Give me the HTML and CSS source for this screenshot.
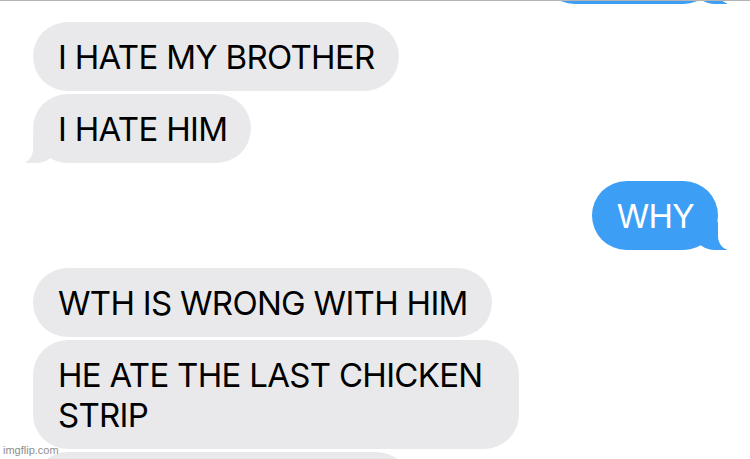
FILE: index.html
```html
<!DOCTYPE html>
<html lang="en">
<head>
    <meta charset="UTF-8">
    <meta name="viewport" content="width=device-width, initial-scale=1.0">
    <title>Messages</title>
    <link rel="stylesheet" href="styles.css">
</head>
<body>

    <div class="thread">
        <div class="bubble sent tail clipped"></div>

        <div class="bubble received first">I HATE MY BROTHER</div>
        <div class="bubble received tail">I HATE HIM</div>

        <div class="bubble sent tail first">WHY</div>

        <div class="bubble received first">WTH IS WRONG WITH HIM</div>
        <div class="bubble received">HE ATE THE LAST CHICKEN STRIP</div>
        <div class="bubble received next"></div>
    </div>

    <div class="watermark">imgflip.com</div>

</body>
</html>
```

FILE: styles.css
```css
/* Global reset */
* {
    margin: 0;
    padding: 0;
    box-sizing: border-box;
}

body {
    font-family: Inter, "Liberation Sans", Arial, sans-serif;
    background-color: #ffffff;
    height: 100vh;
    overflow: hidden;
    border-top: 1px solid #b4b4b4;
}

.thread {
    display: flex;
    flex-direction: column;
    align-items: flex-start;
    gap: 3px;
    padding: 0 32px 0 33px;
}

.bubble {
    position: relative;
    max-width: 486px;
    padding: 15px 24px 14px 25px;
    border-radius: 35px;
    font-size: 33px;
    line-height: 40px;
    letter-spacing: -0.7px;
}

.received {
    background-color: #e9e9eb;
    color: #000;
}

.sent {
    align-self: flex-end;
    background-color: #3d9ef5;
    color: #fff;
}

.first {
    margin-top: 15px;
}

/* tails */
.tail::before,
.tail::after {
    content: "";
    position: absolute;
    bottom: 0;
    height: 28px;
}

.received.tail::before {
    left: -7px;
    width: 30px;
    background-color: #e9e9eb;
    border-bottom-right-radius: 20px 16px;
}

.received.tail::after {
    left: -14px;
    width: 14px;
    background-color: #fff;
    border-bottom-right-radius: 12px 14px;
}

.sent.tail::before {
    right: -9px;
    width: 32px;
    background-color: #3d9ef5;
    border-bottom-left-radius: 20px 16px;
}

.sent.tail::after {
    right: -16px;
    width: 16px;
    background-color: #fff;
    border-bottom-left-radius: 12px 14px;
}

.clipped {
    width: 178px;
    height: 69px;
    margin-top: -66px;
}

.next {
    width: 378px;
    height: 69px;
}

.watermark {
    position: absolute;
    left: 3px;
    bottom: 3px;
    font-family: "Liberation Sans", Arial, sans-serif;
    font-size: 11px;
    color: #8e8e8e;
}
```
